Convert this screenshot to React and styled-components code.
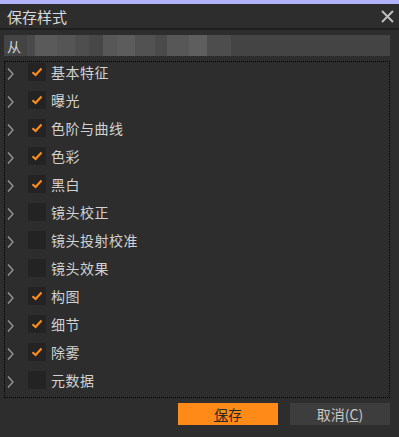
import React from 'react';
import styled, { createGlobalStyle } from 'styled-components';

const GlobalStyle = createGlobalStyle`
  html, body {
    margin: 0;
    padding: 0;
    background: #2d2d2d;
  }
  body {
    font-family: 'Noto Sans CJK SC', 'Noto Sans', sans-serif;
  }
`;

const DialogWindow = styled.div`
  width: 399px;
  height: 437px;
  background: #2d2d2d;
  display: flex;
  flex-direction: column;
  border-top: 4px solid #b3b3fa;
  box-sizing: border-box;
  overflow: hidden;
`;

const TitleBar = styled.div`
  height: 24px;
  display: flex;
  align-items: center;
  justify-content: space-between;
  padding: 0 5px 0 7px;
  border-bottom: 2px solid #1f1f1f;
`;

const Title = styled.div`
  font-size: 15px;
  color: #dadada;
  line-height: 1;
`;

const CloseButton = styled.div`
  width: 14px;
  height: 14px;
  display: flex;
  align-items: center;
  justify-content: center;
`;

const DialogBody = styled.div`
  display: flex;
  flex-direction: column;
  padding: 5px 9px 0 4px;
`;

const SourceBox = styled.div`
  height: 21px;
  background: #444444;
  display: flex;
  align-items: center;
  padding-left: 3px;
  font-size: 14px;
  color: #d4d4d4;
  gap: 6px;
`;

const Mosaic = styled.div`
  display: flex;
  height: 21px;
`;

const MosaicTile = styled.div`
  width: ${(p) => p.$w}px;
  height: 100%;
  background: ${(p) => p.$c};
`;

const StyleList = styled.div`
  margin-top: 5px;
  height: 337px;
  border: 1px dotted #000;
  box-sizing: border-box;
  display: flex;
  flex-direction: column;
`;

const Row = styled.div`
  height: 28px;
  flex: none;
  display: flex;
  align-items: flex-start;
`;

const Expander = styled.div`
  width: 20px;
  padding: 6px 0 0 2px;
  display: flex;
`;

const CheckBox = styled.div`
  width: 18px;
  height: 18px;
  margin: 1px 0 0 1px;
  background: #232323;
  display: flex;
  align-items: center;
  justify-content: center;
`;

const Label = styled.div`
  margin-left: 5px;
  font-size: 14px;
  line-height: 20px;
  color: #d2d2d2;
  letter-spacing: 0.5px;
`;

const ButtonBar = styled.div`
  display: flex;
  justify-content: flex-end;
  gap: 12px;
  padding-top: 5px;
`;

const Button = styled.button`
  width: 100px;
  height: 22px;
  border: none;
  padding: 0;
  font-family: 'Noto Sans CJK SC', 'Noto Sans', sans-serif;
  font-size: 14px;
  line-height: 22px;
  background: ${(p) => (p.$primary ? '#ff8a18' : '#3d3d3d')};
  color: ${(p) => (p.$primary ? '#2a2a2a' : '#c8c8c8')};
`;

const AccessKey = styled.span`
  text-decoration: underline;
`;

const items = [
  ['基本特征', true],
  ['曝光', true],
  ['色阶与曲线', true],
  ['色彩', true],
  ['黑白', true],
  ['镜头校正', false],
  ['镜头投射校准', false],
  ['镜头效果', false],
  ['构图', true],
  ['细节', true],
  ['除雾', true],
  ['元数据', false],
];

const mosaicTiles = [
  [8, '#4a4a4a'],
  [22, '#5a5a5a'],
  [18, '#555555'],
  [14, '#4e4e4e'],
  [14, '#474747'],
  [14, '#575757'],
  [18, '#5c5c5c'],
  [20, '#525252'],
  [12, '#4a4a4a'],
  [22, '#575757'],
  [18, '#5e5e5e'],
  [24, '#4d4d4d'],
];

function Chevron() {
  return (
    <svg width="7" height="12" viewBox="0 0 7 12">
      <path d="M1 0.5 L6 6 L1 11.5" fill="none" stroke="#9a9a9a" strokeWidth="1.3" />
    </svg>
  );
}

function Tick() {
  return (
    <svg width="12" height="10" viewBox="0 0 12 10">
      <path d="M1.5 5.2 L4.6 8 L10.5 1.5" fill="none" stroke="#ff8c1a" strokeWidth="2.2" />
    </svg>
  );
}

export default function App() {
  return (
    <>
      <GlobalStyle />
      <DialogWindow>
        <TitleBar>
          <Title>保存样式</Title>
          <CloseButton>
            <svg width="13" height="13" viewBox="0 0 13 13">
              <path d="M1 1 L12 12 M12 1 L1 12" stroke="#bdbdbd" strokeWidth="2" />
            </svg>
          </CloseButton>
        </TitleBar>
        <DialogBody>
          <SourceBox>
            <span>从</span>
            <Mosaic>
              {mosaicTiles.map(([w, c], i) => (
                <MosaicTile key={i} $w={w} $c={c} />
              ))}
            </Mosaic>
          </SourceBox>
          <StyleList>
            {items.map(([name, checked]) => (
              <Row key={name}>
                <Expander>
                  <Chevron />
                </Expander>
                <CheckBox>{checked && <Tick />}</CheckBox>
                <Label>{name}</Label>
              </Row>
            ))}
          </StyleList>
          <ButtonBar>
            <Button $primary>
              <AccessKey>保</AccessKey>存
            </Button>
            <Button>
              取消(<AccessKey>C</AccessKey>)
            </Button>
          </ButtonBar>
        </DialogBody>
      </DialogWindow>
    </>
  );
}
